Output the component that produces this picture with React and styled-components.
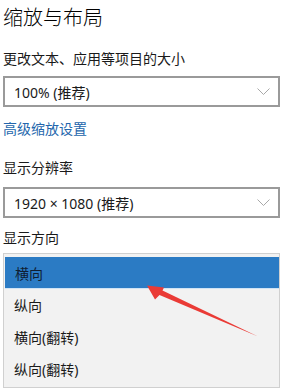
import React from "react";
import styled, { createGlobalStyle } from "styled-components";

const Global = createGlobalStyle`
  html, body { margin: 0; padding: 0; background: #ffffff; }
  body { font-family: "Noto Sans", "Noto Sans CJK SC", sans-serif; color: #000; font-weight: 400; }
  * { box-sizing: border-box; }
`;

const Page = styled.div`
  position: relative;
  width: 281px;
  height: 390px;
  overflow: hidden;
  padding: 4px 1px 0 3px;
  display: flex;
  flex-direction: column;
`;

const Title = styled.div`
  font-size: 20px;
  line-height: 28px;
  font-weight: 300;
  color: #000;
  white-space: nowrap;
`;

const Label = styled.div`
  font-size: 14px;
  line-height: 20px;
  color: #1a1a1a;
  margin-top: ${(p) => p.$mt}px;
  white-space: nowrap;
`;

const Link = styled.div`
  font-size: 14px;
  line-height: 20px;
  color: #2366ac;
  margin-top: ${(p) => p.$mt}px;
`;

const Select = styled.div`
  margin-top: ${(p) => p.$mt}px;
  height: 31px;
  border: 2px solid #9a9a9a;
  background: #fff;
  display: flex;
  align-items: center;
  justify-content: space-between;
  padding: 0 8px 0 9px;
  font-size: 14px;
  color: #1a1a1a;
`;

const Chevron = () => (
  <svg width="13" height="7" viewBox="0 0 13 7">
    <path d="M0.5 0.5 L6.5 6.5 L12.5 0.5" fill="none" stroke="#a8a8a8" strokeWidth="1" />
  </svg>
);

const Menu = styled.div`
  margin-top: ${(p) => p.$mt}px;
  border: 1px solid #d0d0d0;
  background: #f2f2f2;
  padding: 3px 0 2px 0;
  display: flex;
  flex-direction: column;
`;

const Item = styled.div`
  height: 32px;
  display: flex;
  align-items: center;
  padding-left: 10px;
  font-size: 14px;
  color: ${(p) => (p.$selected ? "#0f1e33" : "#1a1a1a")};
  background: ${(p) => (p.$selected ? "#2b7bc4" : "transparent")};
  margin: ${(p) => (p.$selected ? "0 0 0 1px" : "0")};
  border-bottom: ${(p) => (p.$selected ? "1px solid #cfe3f5" : "none")};
`;

const Arrow = styled.svg`
  position: absolute;
  left: 0;
  top: 0;
  pointer-events: none;
`;

export default function App() {
  return (
    <>
      <Global />
      <Page>
        <Title>缩放与布局</Title>
        <Label $mt={17}>更改文本、应用等项目的大小</Label>
        <Select $mt={7}>
          <span>100% (推荐)</span>
          <Chevron />
        </Select>
        <Link $mt={12}>高级缩放设置</Link>
        <Label $mt={19}>显示分辨率</Label>
        <Select $mt={9}>
          <span>1920 × 1080 (推荐)</span>
          <Chevron />
        </Select>
        <Label $mt={10}>显示方向</Label>
        <Menu $mt={5}>
          <Item $selected>横向</Item>
          <Item>纵向</Item>
          <Item>横向(翻转)</Item>
          <Item>纵向(翻转)</Item>
        </Menu>
        <Arrow width="281" height="390" viewBox="0 0 281 390">
          <polygon
            points="147,285.5 164,287.5 162.5,290.5 258,336.5 159.5,295 155,299.5"
            fill="#ea3b36"
          />
        </Arrow>
      </Page>
    </>
  );
}
